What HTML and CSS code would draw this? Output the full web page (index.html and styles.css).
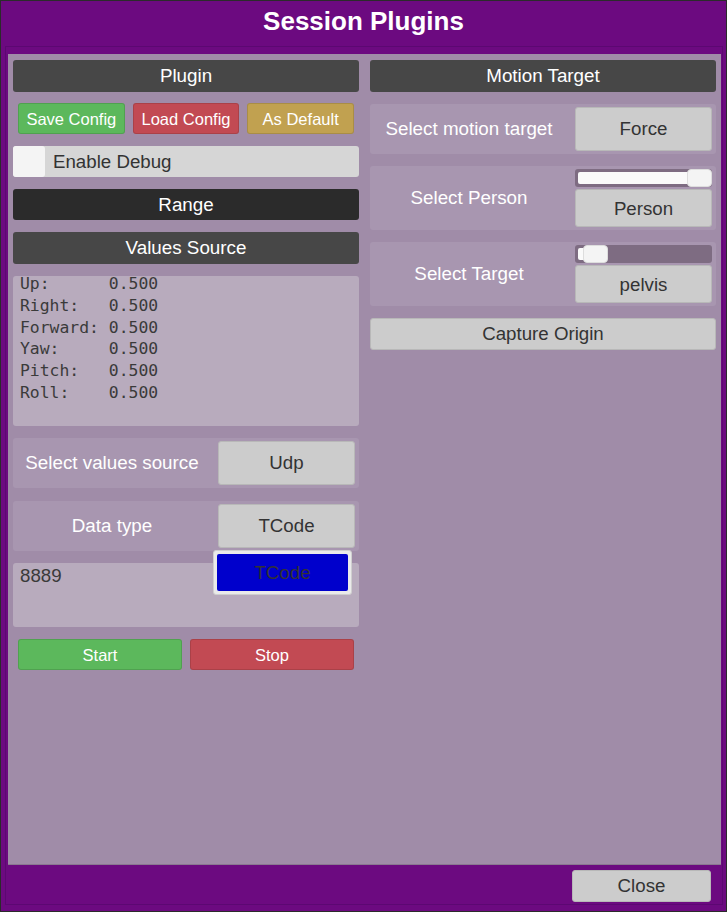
FILE: index.html
```html
<!DOCTYPE html>
<html>
<head>
<meta charset="utf-8">
<link rel="stylesheet" href="styles.css">
</head>
<body>
<div class="window">
  <div class="title">Session Plugins</div>
  <div class="frame">
    <div class="content">
      <div class="col">
        <div class="header">Plugin</div>
        <div class="btn-row three">
          <div class="btn green">Save Config</div>
          <div class="btn red">Load Config</div>
          <div class="btn gold">As Default</div>
        </div>
        <div class="toggle"><span class="check"></span><span class="toggle-label">Enable Debug</span></div>
        <div class="header darker">Range</div>
        <div class="header">Values Source</div>
        <div class="textarea values"><div class="mono">Up:      0.500
Right:   0.500
Forward: 0.500
Yaw:     0.500
Pitch:   0.500
Roll:    0.500</div></div>
        <div class="row">
          <div class="row-label">Select values source</div>
          <div class="row-ctrl"><div class="gbtn">Udp</div></div>
        </div>
        <div class="row has-pop">
          <div class="row-label">Data type</div>
          <div class="row-ctrl"><div class="gbtn">TCode</div></div>
          <div class="popup"><div class="popup-item">TCode</div></div>
        </div>
        <div class="textarea port">8889</div>
        <div class="btn-row two">
          <div class="btn green">Start</div>
          <div class="btn red">Stop</div>
        </div>
      </div>
      <div class="col">
        <div class="header">Motion Target</div>
        <div class="row">
          <div class="row-label">Select motion target</div>
          <div class="row-ctrl"><div class="gbtn">Force</div></div>
        </div>
        <div class="row tall">
          <div class="row-label">Select Person</div>
          <div class="row-ctrl stack">
            <div class="slider"><div class="fill full"></div><div class="handle end"></div></div>
            <div class="gbtn">Person</div>
          </div>
        </div>
        <div class="row tall">
          <div class="row-label">Select Target</div>
          <div class="row-ctrl stack">
            <div class="slider"><div class="fill small"></div><div class="handle start"></div></div>
            <div class="gbtn">pelvis</div>
          </div>
        </div>
        <div class="gbtn wide">Capture Origin</div>
      </div>
    </div>
    <div class="footer"><div class="gbtn close">Close</div></div>
  </div>
</div>
</body>
</html>
```
FILE: styles.css
```css
* { box-sizing: border-box; }
html, body { margin: 0; padding: 0; background: #2a2a2a; }
body { font-family: "Liberation Sans", Arial, sans-serif; }
.window {
  width: 727px; height: 912px;
  background: #6c0a80;
  border: 1px solid #2b2b2b;
  display: flex; flex-direction: column;
}
.title {
  height: 45px;
  color: #fff; font-weight: bold; font-size: 26px;
  text-align: center; line-height: 40px;
}
.frame {
  margin: 0 3px 6px 4px;
  border: 1px solid #5c0872;
  flex: 1;
  padding: 7px 1px 0 2px;
  display: flex; flex-direction: column;
}
.content {
  background: #a08ca8;
  height: 811px;
  padding: 6px 4px 0 5px;
  display: grid;
  grid-template-columns: 346px 346px;
  column-gap: 11px;
  align-items: start;
  border-bottom: 1px solid #8a7890;
}
.col { display: flex; flex-direction: column; gap: 12px; }
.header {
  height: 32px; background: #474747; color: #fff;
  border-radius: 3px; text-align: center; font-size: 18.8px; line-height: 32px;
}
.header.darker { background: #2b2b2b; height: 31px; line-height: 31px; }
.btn-row { display: flex; gap: 8px; padding: 0 5px; margin-top: -1px; }
.btn-row.two { margin-top: 0; }
.btn {
  flex: 1; height: 31px; color: #fff; font-size: 16.5px; text-align: center;
  line-height: 31px; border-radius: 3px; border: 1px solid rgba(0,0,0,0.12);
}
.green { background: #5cb85c; }
.red { background: #c24a53; }
.gold { background: #c1a150; }
.toggle {
  height: 31px; background: #d6d6d6; border-radius: 3px;
  display: flex; align-items: center; color: #333; font-size: 18.7px;
}
.check { width: 32px; height: 31px; background: #f4f4f4; border-radius: 3px; }
.toggle-label { margin-left: 8px; }
.textarea {
  background: #b8abbd; border-radius: 3px; color: #3a3a3a;
  white-space: pre; padding: 1px 7px;
}
.values { height: 150px; padding-top: 0; }
.mono {
  font-family: "DejaVu Sans Mono", monospace; font-size: 16.4px; line-height: 21.8px;
  margin-top: -3px;
}
.port { height: 64px; font-size: 18.7px; padding-top: 2px; }
.row {
  height: 50px; background: #a896b0; border-radius: 3px;
  display: flex; align-items: center; position: relative;
}
.row.has-pop { margin-top: 1px; }
.row.tall { height: 64px; }
.row-label { width: 198px; margin-right: 7px; text-align: center; color: #fff; font-size: 18.8px; }
.row-ctrl { width: 137px; display: flex; flex-direction: column; gap: 2px; }
.gbtn {
  background: #cccccc; color: #333; font-size: 18.7px; text-align: center;
  border-radius: 3px; border: 1px solid #b8b8b8; height: 44px; line-height: 42px;
}
.stack .gbtn { height: 38px; line-height: 38px; }
.slider {
  height: 18px; background: #7e6c82; border-radius: 3px; position: relative;
}
.fill { position: absolute; left: 3px; top: 3px; bottom: 3px; background: #fafafa; border-radius: 2px; }
.fill.full { right: 12px; }
.fill.small { width: 10px; }
.handle {
  position: absolute; top: 0; width: 25px; height: 18px;
  background: #f4f4f4; border-radius: 4px; border: 1px solid #ddd;
}
.handle.end { right: 0; }
.handle.start { left: 8px; }
.gbtn.wide { height: 32px; line-height: 30px; }
.popup {
  position: absolute; left: 200px; top: 49px; width: 139px; height: 45px;
  background: #eaeaea; border: 1px solid #cfcfcf; border-radius: 3px; padding: 3px;
  z-index: 2;
}
.popup-item {
  background: #0000cc; height: 100%; border-radius: 2px; color: #333;
  text-align: center; font-size: 18.7px; line-height: 38px;
}
.footer { display: flex; justify-content: flex-end; padding: 5px 10px 0 0; }
.close { width: 139px; height: 32px; line-height: 30px; }
```
